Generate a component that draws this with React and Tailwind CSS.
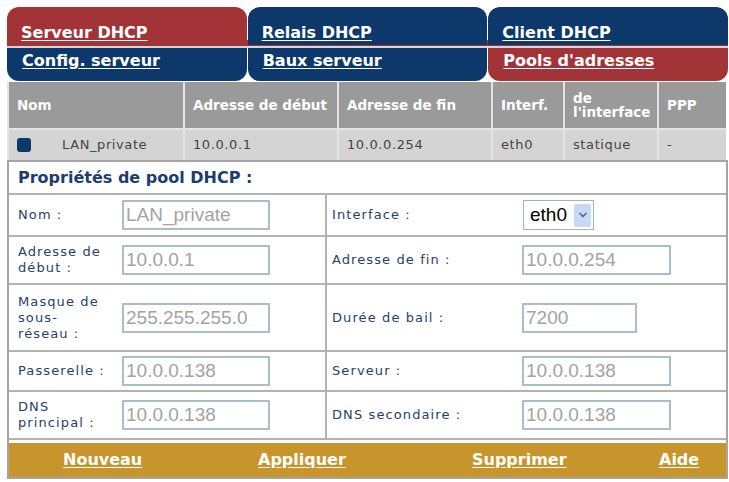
import { ChevronDown } from "lucide-react";

const RED = "bg-[#a23336]";
const NAVY = "bg-[#0c386c]";

const topTabs = [
  { label: "Serveur DHCP", active: true },
  { label: "Relais DHCP" },
  { label: "Client DHCP" },
];

const subTabs = [
  { label: "Config. serveur" },
  { label: "Baux serveur" },
  { label: "Pools d'adresses", active: true },
];

const headers = ["Nom", "Adresse de début", "Adresse de fin", "Interf.", "de\nl'interface", "PPP"];

// small helpers
const Label = ({ children, right }) => (
  <div
    className={`h-full flex items-center text-[13px] leading-[16px] tracking-[1.1px] text-[#263f6c] ${
      right ? "pl-[5px] border-l-2 border-[#b3b3b3]" : "pl-[9px]"
    }`}
  >
    <span>{children}</span>
  </div>
);

const Field = ({ value, w = "w-[148px]" }) => (
  <div className="h-full flex items-center pl-[2px]">
    <input
      readOnly
      value={value}
      className={`${w} h-[30px] border-2 border-[#aabccd] bg-white px-[2px] text-[19px] text-[#a3a3a3] font-['Liberation_Sans',Arial,sans-serif] outline-none`}
    />
  </div>
);

const Row = ({ h, children }) => (
  <div className={`${h} grid grid-cols-[111px_205px_195px_1fr] border-b-2 border-[#b3b3b3]`}>{children}</div>
);

export default function App() {
  return (
    <div className="w-[729px] h-[482px] bg-white pt-[7px] pl-[7px] font-['DejaVu_Sans',Verdana,sans-serif] overflow-hidden">
      <div className="w-[721px]">
        {/* top tabs */}
        <div className="grid grid-cols-3 gap-px h-[33px]">
          {topTabs.map((t) => (
            <div key={t.label} className={`${t.active ? RED : NAVY} rounded-t-[12px] pl-[14px] pt-[14px]`}>
              <a className="text-white font-bold text-[16px] leading-[19px] underline underline-offset-[2px]">{t.label}</a>
            </div>
          ))}
        </div>
        <div className={`h-[6px] ${RED}`} />
        <div className="h-[2px] bg-[#d6d6d6]" />

        {/* sub tabs */}
        <div className="grid grid-cols-3 gap-px h-[33px]">
          {subTabs.map((t) => (
            <div key={t.label} className={`${t.active ? RED : NAVY} rounded-b-[12px] pl-[15px] pt-[1px]`}>
              <a className="text-white font-bold text-[16px] leading-[19px] underline underline-offset-[2px]">{t.label}</a>
            </div>
          ))}
        </div>

        {/* pool list */}
        <div className="mt-px w-[719px] grid grid-cols-[174px_152px_152px_70px_92px_1fr] gap-[2px] bg-[#e4e4e4] pl-[2px]">
          {headers.map((h) => (
            <div
              key={h}
              className="h-[46px] bg-[#9a9a9a] flex items-center px-[8px] text-white font-bold text-[13.5px] leading-[14px] whitespace-pre-line"
            >
              {h}
            </div>
          ))}
          <div className="h-[30px] bg-[#d4d4d4] flex items-center pl-[8px] text-[13px] tracking-[0.6px] text-[#444]">
            <span className="w-[14px] h-[14px] rounded-[3px] bg-[#0c386c] mr-[31px]" />
            LAN_private
          </div>
          {["10.0.0.1", "10.0.0.254", "eth0", "statique", "-"].map((c, i) => (
            <div key={i} className="h-[30px] bg-[#d4d4d4] flex items-center px-[8px] text-[13px] tracking-[0.6px] text-[#444]">
              {c}
            </div>
          ))}
        </div>

        {/* properties */}
        <div className="w-[721px] border-x-2 border-t-2 border-[#a5a5a5] bg-white">
          <div className="h-[33px] border-b-2 border-[#b3b3b3] flex items-center pl-[9px] text-[16px] font-bold text-[#1b3d70]">
            Propriétés de pool DHCP :
          </div>
          <Row h="h-[42px]">
            <Label>Nom :</Label>
            <Field value="LAN_private" />
            <Label right>Interface :</Label>
            <div className="h-full flex items-center pl-[3px]">
              <div className="w-[71px] h-[30px] border border-[#9fb3c8] bg-white flex items-center pl-[6px] pr-[2px] justify-between">
                <span className="text-[19px] text-black font-['Liberation_Sans',Arial,sans-serif]">eth0</span>
                <span className="w-[17px] h-[23px] rounded-[2px] bg-[#c9d9f1] flex items-center justify-center">
                  <ChevronDown size={12} strokeWidth={3.5} className="text-[#4a6a9c]" />
                </span>
              </div>
            </div>
          </Row>
          <Row h="h-[48px]">
            <Label>
              Adresse de
              <br />
              début :
            </Label>
            <Field value="10.0.0.1" />
            <Label right>Adresse de fin :</Label>
            <Field value="10.0.0.254" w="w-[149px]" />
          </Row>
          <Row h="h-[67px]">
            <Label>
              Masque de
              <br />
              sous-
              <br />
              réseau :
            </Label>
            <Field value="255.255.255.0" />
            <Label right>Durée de bail :</Label>
            <Field value="7200" w="w-[115px]" />
          </Row>
          <Row h="h-[40px]">
            <Label>Passerelle :</Label>
            <Field value="10.0.0.138" />
            <Label right>Serveur :</Label>
            <Field value="10.0.0.138" w="w-[149px]" />
          </Row>
          <Row h="h-[48px]">
            <Label>
              DNS
              <br />
              principal :
            </Label>
            <Field value="10.0.0.138" />
            <Label right>DNS secondaire :</Label>
            <Field value="10.0.0.138" w="w-[149px]" />
          </Row>
          <div className="h-[3px]" />
          {/* actions */}
          <div className="h-[36px] bg-[#c8952d] grid grid-cols-[195px_214px_187px_1fr] pl-[54px] items-center border-b-2 border-[#a5a5a5]">
            {["Nouveau", "Appliquer", "Supprimer", "Aide"].map((a) => (
              <a key={a} className="text-white font-bold text-[16px] underline underline-offset-[2px]">
                {a}
              </a>
            ))}
          </div>
        </div>
      </div>
    </div>
  );
}
